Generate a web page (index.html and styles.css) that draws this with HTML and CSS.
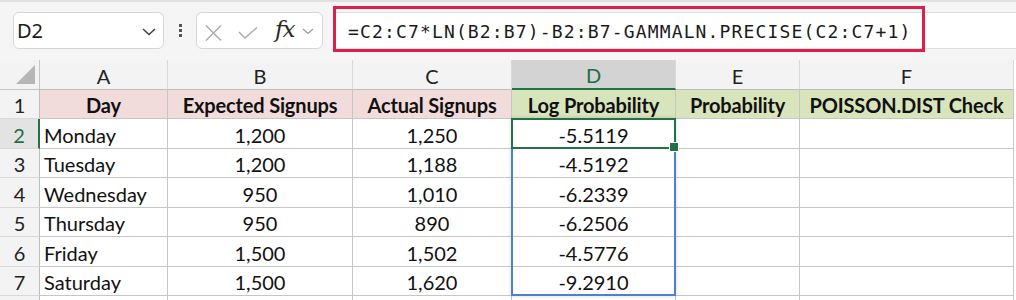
FILE: index.html
```html
<!DOCTYPE html>
<html lang="en">
<head>
    <meta charset="UTF-8">
    <title>Poisson Log Probability</title>
    <link rel="stylesheet" href="styles.css">
</head>
<body>
    <div class="toolbar">
        <div class="name-box">
            <span class="name-text">D2</span>
            <svg class="chevron" width="14" height="8" viewBox="0 0 14 8"><polyline points="1,1 7,6.5 13,1" fill="none" stroke="#444" stroke-width="1.6"/></svg>
        </div>
        <div class="grip"><i></i><i></i><i></i></div>
        <div class="fn-box">
            <svg class="icon-x" width="17" height="16" viewBox="0 0 17 16"><path d="M1 0.5 L16 15.5 M16 0.5 L1 15.5" stroke="#a9a9a9" stroke-width="1.4" fill="none"/></svg>
            <svg class="icon-check" width="20" height="12" viewBox="0 0 20 12"><polyline points="1,5 7,11 19,0.5" fill="none" stroke="#a9a9a9" stroke-width="1.4"/></svg>
            <span class="fx">fx</span>
            <svg class="chevron-sm" width="12" height="7" viewBox="0 0 12 7"><polyline points="1,1 6,5.5 11,1" fill="none" stroke="#9a9a9a" stroke-width="1.3"/></svg>
        </div>
        <div class="formula">
            <span class="formula-text">=C2:C7*LN(B2:B7)-B2:B7-GAMMALN.PRECISE(C2:C7+1)</span>
            <div class="highlight"></div>
        </div>
    </div>

    <div class="sheet">
        <div class="corner"><span class="corner-tri"></span></div>
        <div class="col-head">A</div>
        <div class="col-head">B</div>
        <div class="col-head">C</div>
        <div class="col-head active">D</div>
        <div class="col-head">E</div>
        <div class="col-head">F</div>

        <div class="row-head">1</div>
        <div class="cell hdr pink">Day</div>
        <div class="cell hdr pink">Expected Signups</div>
        <div class="cell hdr pink">Actual Signups</div>
        <div class="cell hdr green">Log Probability</div>
        <div class="cell hdr green">Probability</div>
        <div class="cell hdr green">POISSON.DIST Check</div>

        <div class="row-head active">2</div>
        <div class="cell day">Monday</div>
        <div class="cell num">1,200</div>
        <div class="cell num">1,250</div>
        <div class="cell num selected">-5.5119
            <div class="range"></div>
            <div class="active-cell"><span class="handle"></span></div>
        </div>
        <div class="cell"></div>
        <div class="cell"></div>

        <div class="row-head">3</div>
        <div class="cell day">Tuesday</div>
        <div class="cell num">1,200</div>
        <div class="cell num">1,188</div>
        <div class="cell num">-4.5192</div>
        <div class="cell"></div>
        <div class="cell"></div>

        <div class="row-head">4</div>
        <div class="cell day">Wednesday</div>
        <div class="cell num">950</div>
        <div class="cell num">1,010</div>
        <div class="cell num">-6.2339</div>
        <div class="cell"></div>
        <div class="cell"></div>

        <div class="row-head">5</div>
        <div class="cell day">Thursday</div>
        <div class="cell num">950</div>
        <div class="cell num">890</div>
        <div class="cell num">-6.2506</div>
        <div class="cell"></div>
        <div class="cell"></div>

        <div class="row-head">6</div>
        <div class="cell day">Friday</div>
        <div class="cell num">1,500</div>
        <div class="cell num">1,502</div>
        <div class="cell num">-4.5776</div>
        <div class="cell"></div>
        <div class="cell"></div>

        <div class="row-head">7</div>
        <div class="cell day">Saturday</div>
        <div class="cell num">1,500</div>
        <div class="cell num">1,620</div>
        <div class="cell num">-9.2910</div>
        <div class="cell"></div>
        <div class="cell"></div>

        <div class="row-head"></div>
        <div class="cell"></div>
        <div class="cell"></div>
        <div class="cell"></div>
        <div class="cell"></div>
        <div class="cell"></div>
        <div class="cell"></div>
    </div>
</body>
</html>
```

FILE: styles.css
```css
body {
    margin: 0;
    width: 1016px;
    height: 300px;
    overflow: hidden;
    background-color: #fff;
    font-family: 'Lato', 'Liberation Sans', sans-serif;
    color: #111;
}
.toolbar {
    display: flex;
    height: 60px;
    box-sizing: border-box;
    padding: 10px 0 11px 13px;
    background-color: #f5f5f5;
    border-top: 2px solid #e0e0e0;
}
.name-box {
    width: 151px;
    box-sizing: border-box;
    display: flex;
    align-items: center;
    justify-content: space-between;
    padding: 0 7px 0 3px;
    background-color: #fff;
    border: 1px solid #d6d6d6;
    border-radius: 6px;
}
.name-text {
    font-family: 'Noto Sans', sans-serif;
    font-size: 20px;
    color: #1a1a1a;
}
.chevron {
    margin-top: 2px;
}
.grip {
    width: 32px;
    display: flex;
    flex-direction: column;
    align-items: center;
    justify-content: center;
    gap: 2px;
}
.grip i {
    display: block;
    width: 3px;
    height: 3px;
    background-color: #555;
}
.fn-box {
    width: 127px;
    box-sizing: border-box;
    display: flex;
    align-items: center;
    padding-left: 8px;
    background-color: #fff;
    border: 1px solid #d6d6d6;
    border-radius: 6px;
}
.icon-x {
    margin-top: 4px;
}
.icon-check {
    margin-left: 16px;
    margin-top: 4px;
}
.fx {
    margin-left: 17px;
    font-family: 'DejaVu Serif', serif;
    font-style: italic;
    font-size: 23px;
    color: #2a2a2a;
    line-height: 1;
    margin-top: -2px;
    letter-spacing: -1px;
}
.chevron-sm {
    margin-left: 8px;
    margin-top: 2px;
}
.formula {
    flex: 1;
    position: relative;
    margin-left: 10px;
    display: flex;
    align-items: center;
    padding-left: 14px;
    padding-top: 2px;
    background-color: #fff;
    border: 1px solid #dedede;
    border-right: none;
}
.formula-text {
    font-family: 'DejaVu Sans Mono', monospace;
    font-size: 18px;
    letter-spacing: 1.15px;
    color: #1a1a1a;
}
.highlight {
    position: absolute;
    left: -1px;
    top: -7px;
    width: 592px;
    height: 46px;
    box-sizing: border-box;
    border: 3px solid #dc1f4b;
}
.sheet {
    display: grid;
    grid-template-columns: 40px 128px 185px 159px 164px 124px 214px;
    grid-template-rows: 30px 29px 30px 29px 30px 29px 30px 29px 30px;
    font-size: 20px;
}
.sheet > div {
    box-sizing: border-box;
    display: flex;
    align-items: center;
    justify-content: center;
    border-right: 1px solid #c6c6c6;
    border-bottom: 1px solid #c6c6c6;
}
.corner {
    position: relative;
    background-color: #f3f3f3;
}
.corner-tri {
    position: absolute;
    right: 4px;
    bottom: 5px;
    width: 0;
    height: 0;
    border-left: 19px solid transparent;
    border-bottom: 19px solid #b6b6b6;
}
.sheet > .col-head {
    background-color: #f3f3f3;
    border-right-color: #d9d9d9;
    border-bottom-color: #bdbdbd;
    color: #222;
    padding-top: 2px;
}
.sheet > .col-head.active {
    background-color: #d3d3d3;
    color: #1e6e42;
    border-bottom: 2px solid #217346;
}
.sheet > .row-head {
    background-color: #f3f3f3;
    border-right-color: #bdbdbd;
    border-bottom-color: #d9d9d9;
    color: #222;
    padding-top: 2px;
}
.sheet > .row-head.active {
    background-color: #e3e3e3;
    color: #1e6e42;
    border-right: 2px solid #217346;
}
.cell {
    padding-top: 2px;
}
.hdr {
    font-weight: bold;
    letter-spacing: -0.15px;
}
.pink {
    background-color: #f2dcdb;
}
.green {
    background-color: #d8e4bc;
}
.sheet > .day {
    justify-content: flex-start;
    padding-left: 4px;
}
.selected {
    position: relative;
}
.range {
    position: absolute;
    left: -1px;
    top: -1px;
    width: 165px;
    height: 178px;
    box-sizing: border-box;
    border: 2px solid #4f80d0;
    box-shadow: 0 0 4px rgba(0, 0, 0, 0.15);
    z-index: 1;
}
.active-cell {
    position: absolute;
    left: -1px;
    top: -1px;
    width: 165px;
    height: 31px;
    box-sizing: border-box;
    border: 2px solid #217346;
    z-index: 2;
}
.handle {
    position: absolute;
    right: -5px;
    bottom: -5px;
    width: 8px;
    height: 8px;
    background-color: #217346;
    border: 1px solid #fff;
}
```
